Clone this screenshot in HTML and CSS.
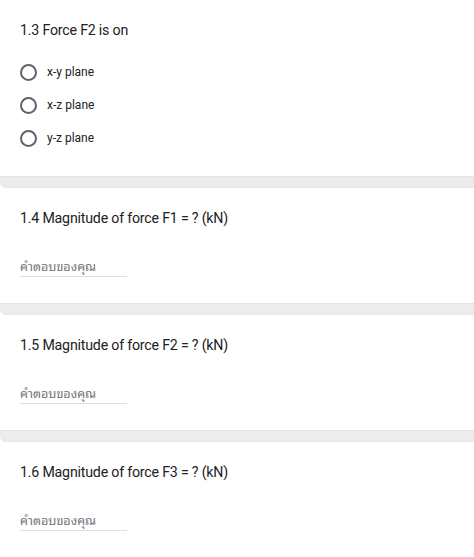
FILE: index.html
```html
<!DOCTYPE html>
<html lang="th">
<head>
<meta charset="utf-8">
<link rel="stylesheet" href="styles.css">
</head>
<body>
<div class="page">
  <section class="card card-first">
    <div class="title">1.3 Force F2 is on</div>
    <div class="options">
      <div class="option"><span class="radio"></span><span class="label">x-y plane</span></div>
      <div class="option"><span class="radio"></span><span class="label">x-z plane</span></div>
      <div class="option"><span class="radio"></span><span class="label">y-z plane</span></div>
    </div>
  </section>
  <div class="gap"></div>
  <section class="card">
    <div class="title">1.4 Magnitude of force F1 = ? (kN)</div>
    <div class="answer">คำตอบของคุณ</div>
  </section>
  <div class="gap"></div>
  <section class="card">
    <div class="title">1.5 Magnitude of force F2 = ? (kN)</div>
    <div class="answer">คำตอบของคุณ</div>
  </section>
  <div class="gap"></div>
  <section class="card">
    <div class="title">1.6 Magnitude of force F3 = ? (kN)</div>
    <div class="answer">คำตอบของคุณ</div>
  </section>
</div>
</body>
</html>
```
FILE: styles.css
```css
html, body {
  margin: 0;
  padding: 0;
  background: #ffffff;
}
body {
  font-family: Roboto, "Noto Sans", "DejaVu Sans", sans-serif;
  color: #202124;
}
.page {
  display: flex;
  flex-direction: column;
  width: 474px;
}
.card {
  background: #ffffff;
  padding: 20px 20px 0 20px;
  height: 115px;
  box-sizing: border-box;
}
.card-first {
  padding-top: 20px;
  height: 176px;
}
.gap {
  height: 12px;
  background: #eeebeb;
  border-top: 1px solid #e6e3e3;
  border-bottom: 1px solid #e8e5e5;
  box-sizing: border-box;
  border-radius: 0 0 0 6px;
}
.title {
  font-size: 14.2px;
  line-height: 20px;
  letter-spacing: -0.2px;
}
.options {
  display: flex;
  flex-direction: column;
  gap: 13px;
  margin-top: 22px;
}
.option {
  display: flex;
  align-items: center;
  height: 20px;
  gap: 10px;
}
.radio {
  width: 13px;
  height: 13px;
  border: 2px solid #5f6368;
  border-radius: 50%;
  flex: none;
}
.label {
  font-size: 12px;
  color: #202124;
}
.answer {
  margin-top: 27px;
  width: 107px;
  font-family: "Noto Sans Thai Looped", "Loma", "Garuda", "Tlwg Typo", Roboto, "Noto Sans", sans-serif;
  font-size: 12.5px;
  color: #70757a;
  padding-bottom: 1px;
  line-height: 20px;
  border-bottom: 1px solid #e0e0e0;
}
```
